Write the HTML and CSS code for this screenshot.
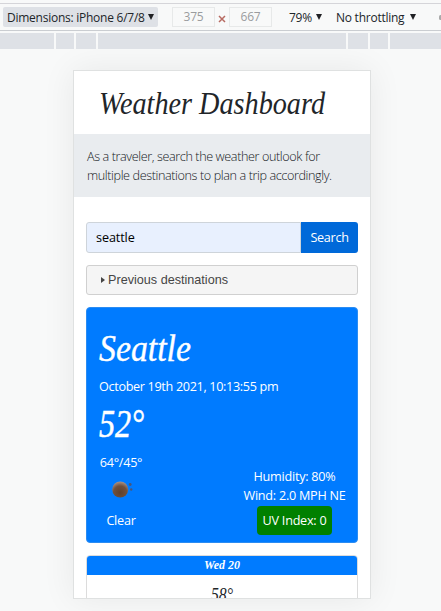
FILE: index.html
```html
<!DOCTYPE html>
<html lang="en">
<head>
<meta charset="utf-8">
<title>Weather Dashboard</title>
<link rel="stylesheet" href="styles.css">
</head>
<body>
<div class="toolbar">
  <div class="device-select"><span class="device-label">Dimensions: iPhone 6/7/8</span><i class="caret"></i></div>
  <div class="size size-w">375</div>
  <svg class="times" width="8" height="8" viewBox="0 0 8 8"><path d="M1 1L7 7M7 1L1 7" stroke="#b76b62" stroke-width="1.5"/></svg>
  <div class="size">667</div>
  <div class="zoom">79%<i class="caret"></i></div>
  <div class="throttle"><span>No throttling</span><i class="caret"></i></div>
  <i class="more"></i>
</div>
<div class="ruler"><i></i><i></i><i></i><i></i><i></i><i></i><i></i></div>
<main class="device">
  <header><h1><svg width="250" height="48"><text x="5" y="32" textLength="226" lengthAdjust="spacingAndGlyphs">Weather Dashboard</text></svg></h1></header>
  <p class="intro">As a traveler, search the weather outlook for<br><span>multiple destinations to plan a trip accordingly.</span></p>
  <div class="content">
    <div class="search"><div class="field">seattle</div><div class="button">Search</div></div>
    <div class="previous"><i></i>Previous destinations</div>
    <section class="today">
      <h2><svg width="110" height="50"><text x="0" y="34" textLength="92" lengthAdjust="spacingAndGlyphs">Seattle</text></svg></h2>
      <p class="date">October 19th 2021, 10:13:55 pm</p>
      <div class="temp"><svg width="70" height="56"><text x="0" y="41" textLength="45" lengthAdjust="spacingAndGlyphs">52°</text></svg></div>
      <div class="details">
        <div class="sky">
          <span>64°/45°</span>
          <svg class="moon" width="40" height="39" viewBox="0 0 40 39">
            <defs><radialGradient id="m" cx=".5" cy=".7" r=".7"><stop offset="0" stop-color="#5f402c"/><stop offset=".6" stop-color="#70503c"/><stop offset="1" stop-color="#ab9489"/></radialGradient></defs>
            <circle cx="19.2" cy="17.5" r="8" fill="url(#m)"/><circle cx="29.2" cy="12.5" r="1.4" fill="#49577a"/><circle cx="30.2" cy="17.5" r="1.2" fill="#49577a"/>
          </svg>
          <span>Clear</span>
        </div>
        <div class="stats"><span>Humidity: 80%</span><span class="wind">Wind: 2.0 MPH NE</span><span class="uv">UV Index: 0</span></div>
      </div>
    </section>
    <section class="forecast">
      <h3><svg width="40" height="19"><text x="2" y="13" textLength="36" lengthAdjust="spacingAndGlyphs">Wed 20</text></svg></h3>
      <div class="high"><svg width="30" height="34"><text x="4" y="26" textLength="22" lengthAdjust="spacingAndGlyphs">58°</text></svg></div>
    </section>
  </div>
</main>
</body>
</html>
```
FILE: styles.css
```css
* { box-sizing: border-box; }
body { margin: 0; width: 441px; height: 611px; overflow: hidden; background: #f8f9f9; font: 12.64px/19px "Open Sans", "Noto Sans", sans-serif; color: #212529; }
h1, h2, h3, p { margin: 0; font-weight: 400; }
svg { display: block; overflow: visible; }
text { font-family: "Liberation Serif", serif; font-style: italic; fill: currentColor; }

.toolbar { display: flex; align-items: center; height: 28px; margin-top: 3px; padding-left: 3px; border-top: 1px solid #d5d5d9; border-bottom: 1px solid #cacdd1; font-size: 12px; white-space: nowrap; letter-spacing: -.25px; overflow: hidden; }
.toolbar > * { flex-shrink: 0; }
.device-select { display: flex; align-items: center; width: 155px; height: 20px; padding-left: 4px; border-radius: 2px; background: #dee1e6; }
.device-label { width: 137px; }
.caret { flex-shrink: 0; display: inline-block; margin-left: 4px; border: solid transparent; border-width: 6px 3.5px 0; border-top-color: #202124; }
.size { width: 43px; height: 20px; border: 1px solid #e7e9e9; color: #9a9c9e; text-align: center; line-height: 18px; }
.size-w { margin-left: 14px; }
.times { margin: 3px 3px 0; }
.zoom { display: flex; align-items: center; width: 47px; margin-left: 17px; }
.throttle { display: flex; align-items: center; }
.throttle span { width: 70px; }
.more { width: 3px; height: 5px; margin-left: 23px; border-left: 2px solid #aaa; border-radius: 3px; }

.ruler { display: grid; grid-template-columns: 54px 18px 20px 248px 20px 18px 1fr; gap: 2px; height: 16px; margin-top: 2px; }
.ruler i { background: #dee1e6; }

.device { width: 298px; height: 529px; margin: 21px 0 0 73px; border: 1px solid #dfe1e1; background: #fff; overflow: hidden; box-shadow: 0 0 32px rgba(0,0,0,.07); }
header { height: 63px; padding: 11px 0 0 20px; }
h1 text { font-size: 32px; }
.intro { height: 63px; padding: 13px 13px 0; background: #e9ecef; color: #15191d; font-weight: 300; white-space: nowrap; letter-spacing: -.4px; }
.content { padding: 25px 12px 0; }
.search { display: flex; height: 31px; }
.field { flex: 1; padding: 5px 9px; border: 1px solid #ced4da; border-radius: 3px 0 0 3px; background: #e8f0fe; color: #000; letter-spacing: -.1px; }
.button { width: 57px; padding: 6px 0; border-radius: 0 3px 3px 0; background: #0069d9; color: #fff; text-align: center; letter-spacing: -.3px; }
.previous { display: flex; align-items: center; height: 30px; margin-top: 12px; padding-left: 14px; border: 1px solid #d0d0d0; border-radius: 3px; background: #f5f5f5; color: #454545; font-family: "Liberation Sans", sans-serif; }
.previous i { margin-right: 3px; border: solid transparent; border-width: 3px 0 3px 4px; border-left-color: #454545; }

.today { height: 236px; margin-top: 12px; padding: 19px 11px 0 12px; border: 1px solid #2b8cf2; border-radius: 4px; background: #007bff; color: #fff; }
h2 { height: 50px; }
h2 text { font-size: 38px; stroke: #fff; stroke-width: .4px; }
.date { letter-spacing: -.33px; white-space: nowrap; }
.temp { height: 57px; }
.temp text { font-size: 39px; stroke: #fff; stroke-width: .5px; }
.details { display: flex; justify-content: space-between; }
.sky { display: flex; flex-direction: column; align-items: center; width: 44px; letter-spacing: -.25px; }
.stats { display: flex; flex-direction: column; align-items: center; width: 103px; padding-top: 14px; white-space: nowrap; letter-spacing: -.25px; }
.uv { height: 29px; margin-top: 1px; padding: 5px 6px; border-radius: 4px; background: #008000; }

.forecast { height: 100px; margin-top: 12px; border: 1px solid #dcdcdc; border-radius: 4px; overflow: hidden; }
h3 { display: flex; justify-content: center; height: 19px; background: #007bff; color: #fff; }
h3 text { font-size: 13px; font-weight: 700; }
.high { display: flex; justify-content: center; }
.high text { font-size: 19px; }
```
